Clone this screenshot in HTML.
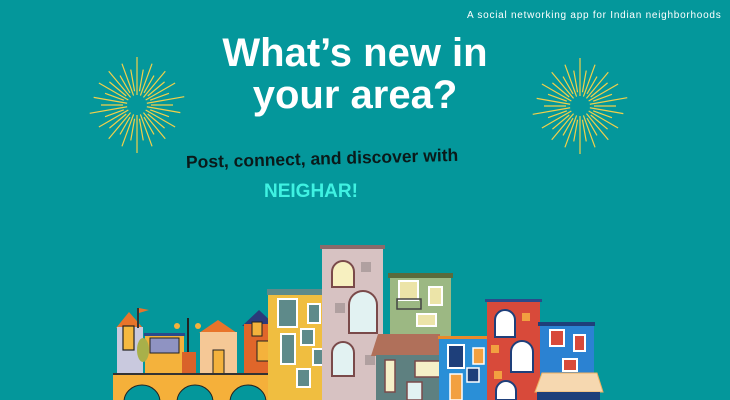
<!DOCTYPE html>
<html><head><meta charset="utf-8"><style>
*{margin:0;padding:0;box-sizing:border-box}
body{width:730px;height:400px;background:#04979b;position:relative;overflow:hidden;font-family:"Liberation Sans",sans-serif}
.a{position:absolute}
.t{color:#fff;font-weight:bold;text-align:center}
</style></head><body>
<div class="a" style="left:467px;top:10px;font-size:10px;color:#fff;letter-spacing:0.75px;white-space:nowrap">A social networking app for Indian neighborhoods</div>
<div class="a t" style="left:155px;top:32px;width:400px;font-size:40px;line-height:42px">What’s new in<br>your area?</div>
<div class="a" style="left:186px;top:152px;font-size:17.5px;font-weight:bold;color:#0a1a1a;transform:rotate(-1.5deg);transform-origin:left;white-space:nowrap">Post, connect, and discover with</div>
<div class="a" style="left:264px;top:181px;font-size:19px;font-weight:bold;color:#3ff2e2">NEIGHAR!</div>

<svg class="a" style="left:0;top:0" width="730" height="400">
<defs><g id="b" stroke="#f2d04a" stroke-width="1.2">
<line x1="0" y1="-10" x2="0" y2="-48"/><line x1="0" y1="-14" x2="0" y2="-36" transform="rotate(10)"/><line x1="0" y1="-10" x2="0" y2="-44" transform="rotate(20)"/><line x1="0" y1="-14" x2="0" y2="-34" transform="rotate(30)"/><line x1="0" y1="-10" x2="0" y2="-44" transform="rotate(40)"/><line x1="0" y1="-14" x2="0" y2="-36" transform="rotate(50)"/><line x1="0" y1="-10" x2="0" y2="-44" transform="rotate(60)"/><line x1="0" y1="-14" x2="0" y2="-34" transform="rotate(70)"/><line x1="0" y1="-10" x2="0" y2="-48" transform="rotate(80)"/><line x1="0" y1="-14" x2="0" y2="-36" transform="rotate(90)"/><line x1="0" y1="-10" x2="0" y2="-44" transform="rotate(100)"/><line x1="0" y1="-14" x2="0" y2="-34" transform="rotate(110)"/><line x1="0" y1="-10" x2="0" y2="-44" transform="rotate(120)"/><line x1="0" y1="-14" x2="0" y2="-36" transform="rotate(130)"/><line x1="0" y1="-10" x2="0" y2="-44" transform="rotate(140)"/><line x1="0" y1="-14" x2="0" y2="-34" transform="rotate(150)"/><line x1="0" y1="-10" x2="0" y2="-44" transform="rotate(160)"/><line x1="0" y1="-14" x2="0" y2="-36" transform="rotate(170)"/><line x1="0" y1="-10" x2="0" y2="-48" transform="rotate(180)"/><line x1="0" y1="-14" x2="0" y2="-36" transform="rotate(190)"/><line x1="0" y1="-10" x2="0" y2="-44" transform="rotate(200)"/><line x1="0" y1="-14" x2="0" y2="-34" transform="rotate(210)"/><line x1="0" y1="-10" x2="0" y2="-44" transform="rotate(220)"/><line x1="0" y1="-14" x2="0" y2="-36" transform="rotate(230)"/><line x1="0" y1="-10" x2="0" y2="-44" transform="rotate(240)"/><line x1="0" y1="-14" x2="0" y2="-34" transform="rotate(250)"/><line x1="0" y1="-10" x2="0" y2="-48" transform="rotate(260)"/><line x1="0" y1="-14" x2="0" y2="-36" transform="rotate(270)"/><line x1="0" y1="-10" x2="0" y2="-44" transform="rotate(280)"/><line x1="0" y1="-14" x2="0" y2="-34" transform="rotate(290)"/><line x1="0" y1="-10" x2="0" y2="-44" transform="rotate(300)"/><line x1="0" y1="-14" x2="0" y2="-36" transform="rotate(310)"/><line x1="0" y1="-10" x2="0" y2="-44" transform="rotate(320)"/><line x1="0" y1="-14" x2="0" y2="-34" transform="rotate(330)"/><line x1="0" y1="-10" x2="0" y2="-44" transform="rotate(340)"/><line x1="0" y1="-14" x2="0" y2="-36" transform="rotate(350)"/>
</g></defs>
<use href="#b" transform="translate(137,105)"/>
<use href="#b" transform="translate(580,106)"/>

<polygon points="116,328 129,312 143,328" fill="#e8742a"/>
<rect x="117" y="327" width="26" height="48" fill="#c9c9de"/>
<rect x="123" y="326" width="11" height="24" fill="#f5b940" stroke="#222" stroke-width="1.2"/>
<rect x="137" y="308" width="2" height="20" fill="#333"/><polygon points="139,308 149,310 139,313" fill="#e8742a"/>
<rect x="145" y="334" width="39" height="40" fill="#f4b23c"/><rect x="144" y="333" width="41" height="3" fill="#2b4a8a"/>
<rect x="150" y="338" width="29" height="15" fill="#8f93c2" stroke="#222" stroke-width="1"/>
<ellipse cx="143" cy="350" rx="6" ry="12" fill="#a8b04a"/>
<rect x="187" y="318" width="2" height="54" fill="#222"/><circle cx="177" cy="326" r="3" fill="#f4b23c"/><circle cx="198" cy="326" r="3" fill="#f4b23c"/>
<rect x="182" y="352" width="14" height="22" fill="#d9622a"/>
<polygon points="199,333 218,320 237,333" fill="#e8742a"/>
<rect x="200" y="332" width="37" height="42" fill="#f5c896"/>
<rect x="213" y="350" width="11" height="24" fill="#f4b23c" stroke="#222" stroke-width="1"/>
<polygon points="242,326 259,310 276,326" fill="#2b3a7a"/>
<rect x="244" y="324" width="31" height="50" fill="#e0662a"/>
<rect x="252" y="322" width="10" height="14" fill="#f4b23c" stroke="#222" stroke-width="1"/>
<rect x="257" y="341" width="12" height="20" fill="#f4b23c" stroke="#222" stroke-width="1"/>
<rect x="113" y="373" width="166" height="27" fill="#f5b03a"/>
<rect x="113" y="373" width="166" height="2" fill="#333"/>
<ellipse cx="142" cy="402" rx="18" ry="17" fill="#04979b" stroke="#222" stroke-width="1"/>
<ellipse cx="195" cy="402" rx="18" ry="17" fill="#04979b" stroke="#222" stroke-width="1"/>
<ellipse cx="248" cy="402" rx="18" ry="17" fill="#04979b" stroke="#222" stroke-width="1"/>
<rect x="268" y="293" width="63" height="107" fill="#f0be40"/>
<rect x="267" y="289" width="64" height="6" fill="#5e8a8a"/>
<rect x="278" y="299" width="19" height="28" fill="#5e8a8a" stroke="#fff" stroke-width="2"/>
<rect x="308" y="304" width="12" height="19" fill="#5e8a8a" stroke="#fff" stroke-width="2"/>
<rect x="301" y="329" width="13" height="16" fill="#5e8a8a" stroke="#fff" stroke-width="2"/>
<rect x="281" y="334" width="14" height="30" fill="#5e8a8a" stroke="#fff" stroke-width="2"/>
<rect x="313" y="349" width="10" height="16" fill="#5e8a8a" stroke="#fff" stroke-width="2"/>
<rect x="297" y="369" width="13" height="18" fill="#5e8a8a" stroke="#fff" stroke-width="2"/>
<rect x="322" y="248" width="61" height="152" fill="#d7c2c2"/>
<rect x="320" y="245" width="65" height="4" fill="#8a6a6a"/>
<path d="M332,287 V272 A11,11 0 0 1 354,272 V287 Z" fill="#f7f0c0" stroke="#7a4a4a" stroke-width="2"/>
<path d="M349,333 V305 A14,14 0 0 1 377,305 V333 Z" fill="#e2f2f2" stroke="#7a4a4a" stroke-width="2"/>
<path d="M332,376 V353 A11,11 0 0 1 354,353 V376 Z" fill="#e2f2f2" stroke="#7a4a4a" stroke-width="2"/>
<rect x="361" y="262" width="10" height="10" fill="#b0a0a0"/><rect x="335" y="303" width="10" height="10" fill="#b0a0a0"/><rect x="365" y="355" width="10" height="10" fill="#b0a0a0"/>
<rect x="390" y="276" width="61" height="60" fill="#9cb883"/>
<rect x="388" y="273" width="65" height="5" fill="#5a6a3c"/>
<rect x="399" y="281" width="19" height="19" fill="#ece4a8" stroke="#fff" stroke-width="2"/>
<rect x="429" y="287" width="13" height="18" fill="#ece4a8" stroke="#fff" stroke-width="2"/>
<rect x="397" y="299" width="24" height="10" fill="none" stroke="#444" stroke-width="1.5"/>
<rect x="417" y="314" width="19" height="12" fill="#ece4a8" stroke="#fff" stroke-width="2"/>
<polygon points="378,334 440,334 440,356 371,356" fill="#b0705a"/>
<rect x="376" y="355" width="64" height="45" fill="#5e8080"/>
<rect x="385" y="360" width="10" height="32" fill="#f5f0c8" stroke="#7a4a4a" stroke-width="1.5"/>
<rect x="415" y="361" width="25" height="16" fill="#f5f0c8" stroke="#7a4a4a" stroke-width="1.5"/>
<rect x="407" y="382" width="15" height="18" fill="#e2f2f2" stroke="#7a4a4a" stroke-width="1.5"/>
<rect x="439" y="339" width="52" height="61" fill="#2a8fd7"/>
<rect x="438" y="336" width="53" height="3" fill="#e88a2a"/>
<rect x="448" y="345" width="16" height="23" fill="#1e3f7a" stroke="#fff" stroke-width="2"/>
<rect x="473" y="348" width="11" height="16" fill="#f2a040" stroke="#fff" stroke-width="1.5"/>
<rect x="467" y="368" width="12" height="14" fill="#1e3f7a" stroke="#fff" stroke-width="1.5"/>
<rect x="450" y="374" width="12" height="26" fill="#f2a040" stroke="#fff" stroke-width="1.5"/>
<rect x="487" y="302" width="53" height="98" fill="#d84a3a"/>
<rect x="485" y="299" width="57" height="3" fill="#2b4a8a"/>
<path d="M495,337 V320 A10,10 0 0 1 515,320 V337 Z" fill="#fff" stroke="#1e3f7a" stroke-width="2"/>
<path d="M511,372 V352 A11,11 0 0 1 533,352 V372 Z" fill="#fff" stroke="#1e3f7a" stroke-width="2"/>
<path d="M496,400 V391 A10,10 0 0 1 516,391 V400 Z" fill="#fff" stroke="#1e3f7a" stroke-width="2"/>
<rect x="522" y="313" width="8" height="8" fill="#f2a040"/><rect x="491" y="345" width="8" height="8" fill="#f2a040"/><rect x="494" y="371" width="8" height="8" fill="#f2a040"/>
<rect x="540" y="325" width="54" height="50" fill="#2b82d2"/>
<rect x="538" y="322" width="57" height="4" fill="#1e3f7a"/>
<rect x="550" y="330" width="14" height="16" fill="#d84a3a" stroke="#fff" stroke-width="2"/>
<rect x="574" y="335" width="11" height="16" fill="#d84a3a" stroke="#fff" stroke-width="2"/>
<rect x="563" y="359" width="14" height="12" fill="#d84a3a" stroke="#fff" stroke-width="2"/>
<polygon points="542,373 597,373 603,392 535,392" fill="#f6d8b0" stroke="#f0b060" stroke-width="1"/>
<rect x="537" y="392" width="63" height="8" fill="#1e3f7a"/>
</svg>
</body></html>
